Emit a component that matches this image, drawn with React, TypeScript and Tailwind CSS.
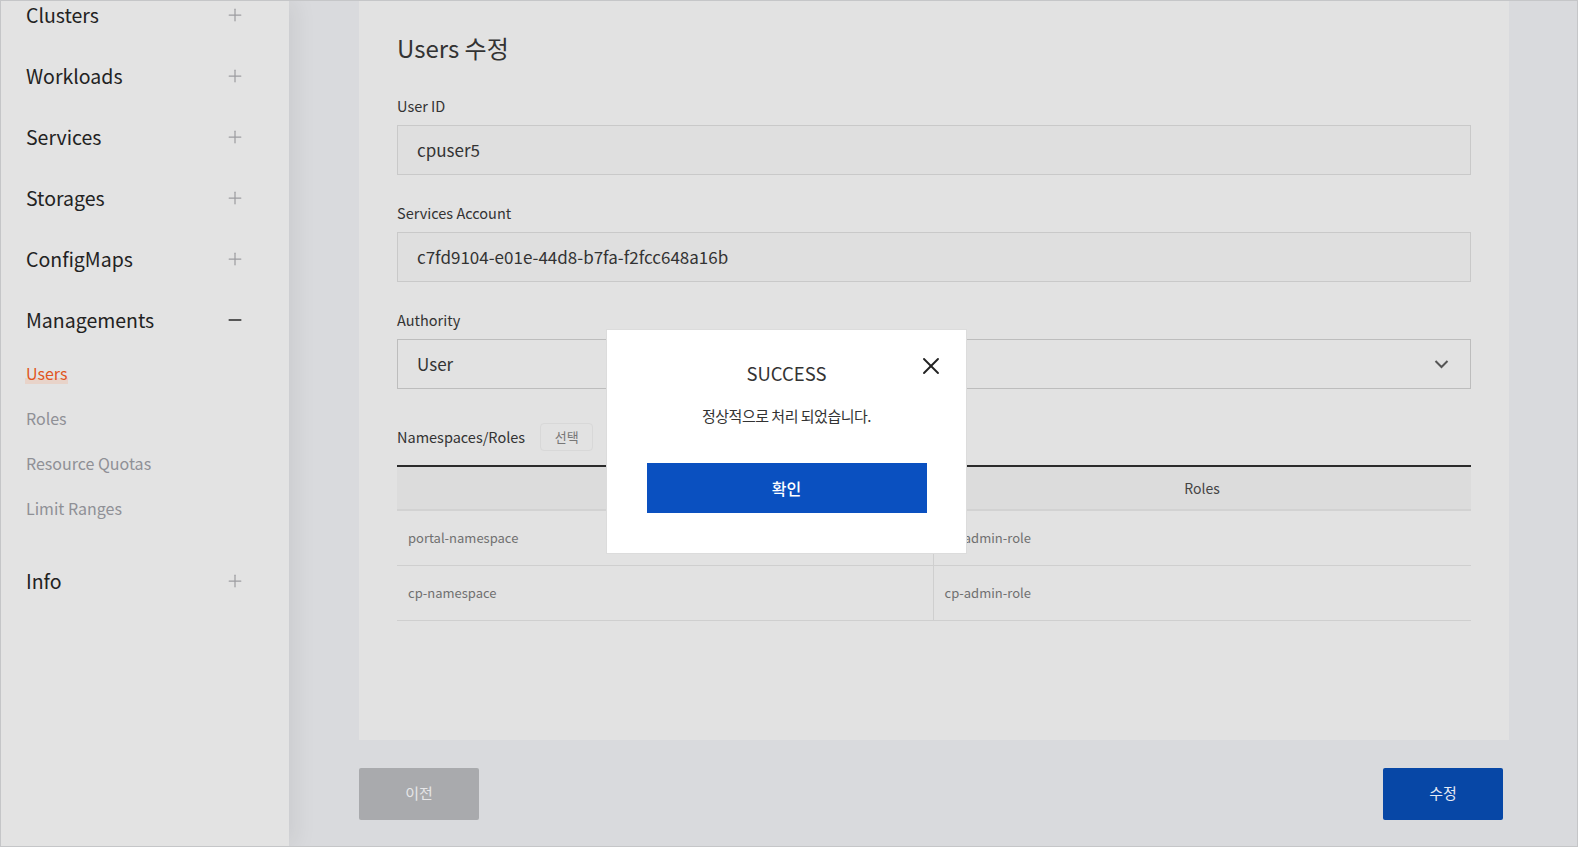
import { Plus, Minus, X } from 'lucide-react'

const FONT = { fontFamily: '"Noto Sans CJK KR", "Noto Sans", sans-serif' }

const topMenus = ['Clusters', 'Workloads', 'Services', 'Storages', 'ConfigMaps']
const subMenus = ['Users', 'Roles', 'Resource Quotas', 'Limit Ranges']

const rows = [
  { ns: 'portal-namespace', role: 'cp-admin-role' },
  { ns: 'cp-namespace', role: 'cp-admin-role' },
]

function MenuRow({ label, open }: { label: string; open?: boolean }) {
  return (
    <div className="h-[61px] flex items-center justify-between pl-[25px] pr-[44px]">
      <span className="text-[19.5px] text-[#222]">{label}</span>
      {open
        ? <Minus className="w-[20px] h-[20px] text-[#2a2a2a]" strokeWidth={1.8} />
        : <Plus className="w-[20px] h-[20px] text-[#9d9da1]" strokeWidth={1.5} />}
    </div>
  )
}

function Field({ label, value }: { label: string; value: string }) {
  return (
    <div>
      <div className="mt-[28px] h-[20px] leading-[20px] text-[14.5px] text-[#333]">{label}</div>
      <div className="mt-[9px] h-[50px] border border-[#c9c9c9] bg-[#dfdfdf] flex items-center pl-[19px] text-[17px] text-[#333]">
        {value}
      </div>
    </div>
  )
}

export default function App() {
  return (
    <div style={FONT} className="relative w-[1578px] h-[847px] overflow-hidden border border-[#c5c6c8] bg-[#d9dadd] flex">
      {/* Sidebar */}
      <aside className="w-[288px] shrink-0 bg-[#e3e3e3] shadow-[6px_0_22px_rgba(0,0,0,0.07)] z-10">
        <div className="-mt-[17px]">
          {topMenus.map(m => <MenuRow key={m} label={m} />)}
          <MenuRow label="Managements" open />
          <div className="pb-[20px]">
            {subMenus.map((s, i) => (
              <div key={s} className="h-[45px] flex items-center pl-[25px]">
                {i === 0 ? (
                  <span className="relative text-[16px] text-[#e0561f]">
                    <span className="absolute left-[-1px] right-[-1px] bottom-[1px] h-[6px] bg-[#e8d3c9]" />
                    <span className="relative">{s}</span>
                  </span>
                ) : (
                  <span className="text-[16px] text-[#8f9096]">{s}</span>
                )}
              </div>
            ))}
          </div>
          <MenuRow label="Info" />
        </div>
      </aside>

      {/* Main */}
      <main className="flex-1 pl-[70px] pr-[68px]">
        <section className="bg-[#e2e2e2] px-[38px] pt-[27px] pb-[119px]">
          <h1 className="h-[40px] leading-[40px] text-[24px] text-[#333]">Users 수정</h1>
          <Field label="User ID" value="cpuser5" />
          <Field label="Services Account" value="c7fd9104-e01e-44d8-b7fa-f2fcc648a16b" />
          <div>
            <div className="mt-[28px] h-[20px] leading-[20px] text-[14.5px] text-[#333]">Authority</div>
            <div className="mt-[9px] h-[50px] border border-[#bdbdbd] bg-[#e2e2e2] flex items-center justify-between pl-[19px] pr-[21px] text-[17px] text-[#333]">
              User
              <svg width="15" height="10" viewBox="0 0 15 10" fill="none">
                <path d="M1.5 2 L7.5 8 L13.5 2" stroke="#555" strokeWidth="2" />
              </svg>
            </div>
          </div>

          <div className="mt-[34px] h-[28px] flex items-center gap-[15px]">
            <span className="text-[14.5px] text-[#333]">Namespaces/Roles</span>
            <button className="w-[53px] h-[28px] border border-[#d8d8d8] rounded-[4px] text-[13px] text-[#777]">선택</button>
          </div>

          <table className="mt-[14px] w-full border-t-2 border-[#2b2b2b] text-[13px]">
            <thead>
              <tr className="h-[44px] bg-[#dcdcdc] border-b-2 border-[#d2d2d2]">
                <th className="w-[536px] font-normal"></th>
                <th className="font-normal text-[14px] text-[#444]">Roles</th>
              </tr>
            </thead>
            <tbody>
              {rows.map(r => (
                <tr key={r.ns} className="h-[55px] border-b border-[#cfcfcf]">
                  <td className="pl-[11px] text-[#707070] border-r border-[#cfcfcf]">{r.ns}</td>
                  <td className="pl-[11px] text-[#707070]">{r.role}</td>
                </tr>
              ))}
            </tbody>
          </table>
        </section>

        <div className="mt-[28px] flex justify-between pr-[6px]">
          <button className="w-[120px] h-[52px] rounded-[2px] bg-[#a9aaad] text-[15px] text-[#e6e6e8]">이전</button>
          <button className="w-[120px] h-[52px] rounded-[2px] bg-[#0747a6] text-[15px] text-[#e6ebf5]">수정</button>
        </div>
      </main>

      {/* Success modal */}
      <div className="absolute left-[605px] top-[328px] w-[361px] h-[225px] bg-white border border-[#dcdcdc] z-20 flex flex-col items-center">
        <button className="absolute left-[310px] top-[22px] text-[#222]">
          <X className="w-[28px] h-[28px]" strokeWidth={1.6} />
        </button>
        <div className="mt-[29px] h-[28px] leading-[28px] text-[18.5px] text-[#333]">SUCCESS</div>
        <div className="mt-[18px] h-[22px] leading-[22px] text-[15px] text-[#333] tracking-[-0.5px]">정상적으로 처리 되었습니다.</div>
        <button className="mt-[36px] w-[280px] h-[50px] bg-[#0a50c0] text-white text-[16px] font-medium">확인</button>
      </div>
    </div>
  )
}
